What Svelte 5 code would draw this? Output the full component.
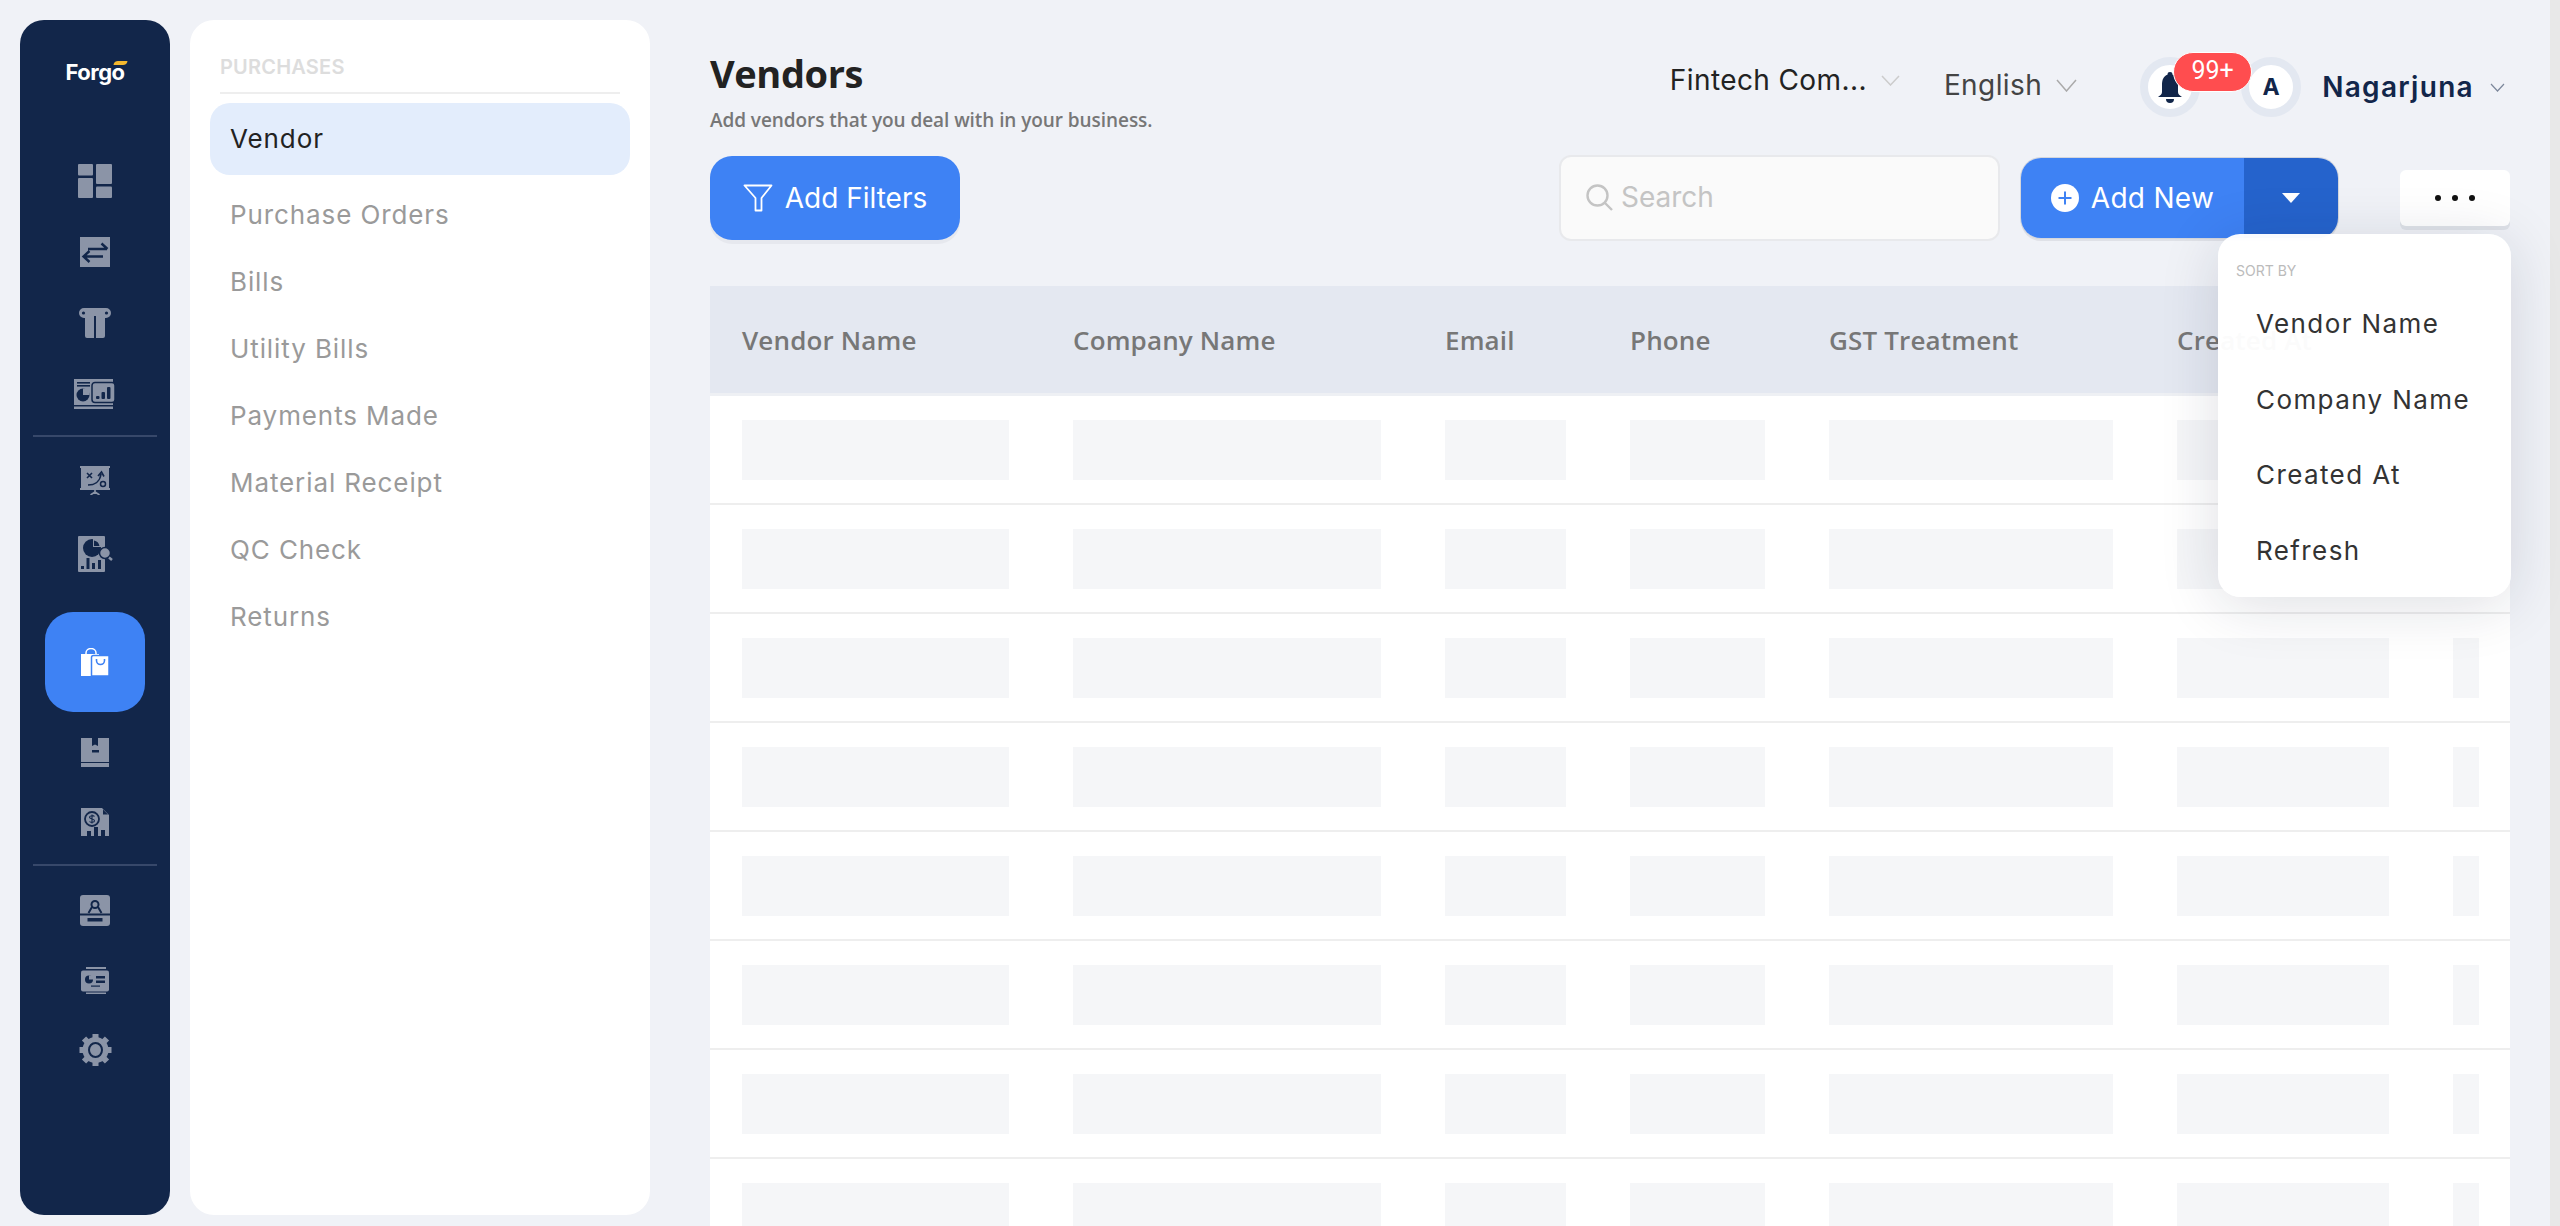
<script>
  const links = ["Purchase Orders", "Bills", "Utility Bills", "Payments Made", "Material Receipt", "QC Check", "Returns"];
  const columns = [
    { label: "Vendor Name", width: 331, bar: 267 },
    { label: "Company Name", width: 372, bar: 308 },
    { label: "Email", width: 185, bar: 121 },
    { label: "Phone", width: 199, bar: 135 },
    { label: "GST Treatment", width: 348, bar: 284 },
    { label: "Created At", width: 276, bar: 212 },
    { label: "", width: 89, bar: 26 }
  ];
  const rows = [0, 1, 2, 3, 4, 5, 6, 7];
  const sortOptions = ["Vendor Name", "Company Name", "Created At", "Refresh"];
</script>

<div class="app">
  <div class="side">
    <nav class="rail">
      <div class="logo">
        <span class="logo-text">Forgo</span>
        <i class="swoosh"></i>
      </div>

      <div class="group">
        <div class="item">
          <svg width="34" height="34" viewBox="0 0 34 34" fill="#8b94a7">
            <rect width="15" height="11.500" rx="1" />
            <rect y="14" width="15" height="20" rx="1" />
            <rect x="18" width="16" height="20" rx="1" />
            <rect x="18" y="22.500" width="16" height="11.500" rx="1" />
          </svg>
        </div>
        <div class="item">
          <svg width="30" height="30" viewBox="0 0 30 30">
            <rect width="30" height="30" fill="#8b94a7" />
            <path d="M8 12h19M21.500 6.500 27.500 12M4 19.500h19M9.500 14 3.500 19.500 9.500 25" fill="none" stroke="#12264a" stroke-width="2.400" />
          </svg>
        </div>
        <div class="item">
          <svg width="32" height="30" viewBox="0 0 32 30" fill="#8b94a7">
            <path d="M5 0h22a5 5 0 0 1 0 10h-1v18a2 2 0 0 1-2 2h-7V8h-2v22H8a2 2 0 0 1-2-2V10H5A5 5 0 0 1 5 0z" />
            <circle cx="4.500" cy="5" r="1.600" fill="#12264a" />
            <circle cx="27.500" cy="5" r="1.600" fill="#12264a" />
          </svg>
        </div>
        <div class="item">
          <svg width="42" height="30" viewBox="0 0 42 30">
            <rect width="39" height="26" fill="#8b94a7" />
            <rect y="27.500" width="39" height="2.500" fill="#8b94a7" />
            <rect x="3" y="3" width="13" height="1.600" fill="#12264a" />
            <rect x="3" y="6" width="13" height="1.600" fill="#12264a" />
            <circle cx="9" cy="16" r="6.500" fill="#12264a" />
            <path d="M9 16V9.500h6.500V16z" fill="#8b94a7" />
            <rect x="18" y="3.500" width="23" height="20" rx="3" fill="#8b94a7" stroke="#12264a" stroke-width="1.500" />
            <rect x="22" y="17" width="3.500" height="3" rx="1" fill="#12264a" />
            <rect x="27.500" y="13" width="3.500" height="7" rx="1" fill="#12264a" />
            <rect x="33" y="8" width="3.500" height="12" rx="1" fill="#12264a" />
          </svg>
        </div>
      </div>

      <hr class="rule first" />

      <div class="group tall">
        <div class="item">
          <svg width="30" height="29" viewBox="0 0 30 29">
            <path d="M0 0h30v2h-1v20h1v2H0v-2h1V2H0z" fill="#8b94a7" />
            <path d="M15 24v2l-4.500 3M15 26l4.500 3" fill="none" stroke="#8b94a7" stroke-width="1.600" />
            <path d="M7 7l5 5M12 7l-5 5M8 19c6 0 12-3 13-11M18 10l3.500-4 2.500 4.500" fill="none" stroke="#12264a" stroke-width="1.600" />
            <circle cx="23" cy="18" r="2.500" fill="none" stroke="#12264a" stroke-width="1.500" />
          </svg>
        </div>
        <div class="item">
          <svg width="35" height="36" viewBox="0 0 35 36">
            <rect width="27" height="36" rx="1" fill="#8b94a7" />
            <circle cx="14" cy="12" r="9" fill="#12264a" />
            <path d="M15 3h8v8h-8z" fill="#8b94a7" />
            <path d="M16 4.500a7 7 0 0 1 5.500 5.500H16z" fill="#12264a" />
            <rect x="3" y="30" width="3" height="3" fill="#12264a" />
            <rect x="8.500" y="22" width="3" height="11" fill="#12264a" />
            <rect x="14" y="27" width="3" height="6" fill="#12264a" />
            <rect x="20" y="24" width="3" height="9" fill="#12264a" />
            <circle cx="27" cy="17" r="5.500" fill="#8b94a7" stroke="#12264a" stroke-width="1.500" />
            <path d="M31 21.500l3 2.500" stroke="#8b94a7" stroke-width="2.500" />
          </svg>
        </div>
      </div>

      <div class="item active">
        <svg width="28" height="28" viewBox="0 0 28 28">
          <path d="M5 6V5a5 4.500 0 0 1 10 0v1" fill="none" stroke="#fff" stroke-width="1.500" />
          <rect y="6" width="18" height="22" fill="#fff" />
          <path d="M10.500 9.500 a2 2 0 0 1 2-2H28v20.500H10.500z" fill="#fff" stroke="#3e82f4" stroke-width="1.500" />
          <path d="M15.500 11v1.500a4 4 0 0 0 8 0V11" fill="none" stroke="#3e82f4" stroke-width="1.600" />
        </svg>
      </div>

      <div class="group third">
        <div class="item">
          <svg width="28" height="29" viewBox="0 0 28 29" fill="#8b94a7">
            <path d="M0 0h11v8l3-1.500L17 8V0h11v24H0z" />
            <rect x="11" y="12" width="7" height="2.500" fill="#12264a" />
            <rect y="25" width="28" height="4" />
          </svg>
        </div>
        <div class="item">
          <svg width="28" height="28" viewBox="0 0 28 28">
            <path d="M0 0h21l7 7v21h-4v-6h-4v6h-3v-9h-4v9h-3v-5H6v5H0z" fill="#8b94a7" />
            <path d="M22 1.500v5h5z" fill="#12264a" />
            <circle cx="11" cy="11" r="7" fill="none" stroke="#12264a" stroke-width="1.800" />
            <path d="M13.500 8.500c-1-1.200-5-1.200-5 .8s5 1.400 5 3.400-4 2-5 .8M11 6.500v9" fill="none" stroke="#12264a" stroke-width="1.100" />
          </svg>
        </div>
      </div>

      <hr class="rule second" />

      <div class="group fourth">
        <div class="item">
          <svg width="30" height="31" viewBox="0 0 30 31">
            <rect width="30" height="31" rx="3" fill="#8b94a7" />
            <rect y="18.500" width="30" height="2" fill="#12264a" />
            <rect x="7.500" y="23" width="15" height="3.500" fill="#12264a" />
            <circle cx="15" cy="9.500" r="3.500" fill="none" stroke="#12264a" stroke-width="2" />
            <path d="M8.500 18 12 12M21.500 18 18 12" fill="none" stroke="#12264a" stroke-width="2" />
          </svg>
        </div>
        <div class="item">
          <svg width="28" height="27" viewBox="0 0 28 27" fill="#8b94a7">
            <rect x="5" width="20" height="2" />
            <rect y="3.500" width="28" height="21" rx="2" />
            <rect x="5" y="25.500" width="20" height="1.500" />
            <circle cx="8" cy="12.500" r="4" fill="#12264a" />
            <path d="M8 8.500h4v4H8z" />
            <rect x="15" y="9" width="9" height="2.500" fill="#12264a" />
            <rect x="15" y="13.500" width="9" height="2.500" fill="#12264a" />
            <rect x="10" y="18.500" width="9" height="1.200" fill="#12264a" />
          </svg>
        </div>
        <div class="item">
          <svg width="33" height="32" viewBox="0 0 33 32" fill="#8b94a7">
            <circle cx="16.500" cy="16" r="13" />
            <g stroke="#8b94a7" stroke-width="6">
              <path d="M16.500 0v32M0.500 16h32M5 4.500l23 23M28 4.500l-23 23" />
            </g>
            <circle cx="16.500" cy="16" r="12" />
            <ellipse cx="16.500" cy="16" rx="6.500" ry="7" fill="none" stroke="#12264a" stroke-width="2" />
          </svg>
        </div>
      </div>
    </nav>

    <aside class="panel">
      <div class="panel-title">PURCHASES</div>
      <ul class="links">
        <li class="current">Vendor</li>
        {#each links as link}
          <li>{link}</li>
        {/each}
      </ul>
    </aside>
  </div>

  <main class="main">
    <header class="top">
      <div class="title">
        <h1>Vendors</h1>
        <p>Add vendors that you deal with in your business.</p>
      </div>
      <div class="controls">
        <div class="select company">
          <span>Fintech Com...</span>
          <svg class="chev" width="19" height="11" viewBox="0 0 19 11"><path d="M1 1l8.500 9L18 1" fill="none" stroke="#ccc" stroke-width="1.500" /></svg>
        </div>
        <div class="select lang">
          <span>English</span>
          <svg class="chev" width="21" height="13" viewBox="0 0 21 13"><path d="M1 1l9.500 11L20 1" fill="none" stroke="#aaa" stroke-width="1.500" /></svg>
        </div>
        <div class="bell ring">
          <svg width="24" height="31" viewBox="0 0 24 31" fill="#12264a">
            <path d="M12 0a2.500 2.500 0 0 1 2.500 2.800C18.500 4 20 8 20 13v7c0 2 1.500 3.500 4 5H0c2.500-1.500 4-3 4-5v-7C4 8 5.500 4 9.500 2.800A2.500 2.500 0 0 1 12 0z" />
            <path d="M8 27h8a4 4 0 0 1-8 0z" />
          </svg>
          <span class="badge">99+</span>
        </div>
        <div class="avatar ring">A</div>
        <div class="select user">
          <span>Nagarjuna</span>
          <svg class="chev" width="15" height="9" viewBox="0 0 15 9"><path d="M1 1l6.500 7L14 1" fill="none" stroke="#7c879b" stroke-width="1.200" /></svg>
        </div>
      </div>
    </header>

    <div class="toolbar">
      <button class="filters">
        <svg width="30" height="28" viewBox="0 0 30 28"><path d="M1.500 1.500h27L18.500 14v12.500h-6V14z" fill="none" stroke="#fff" stroke-width="1.800" stroke-linejoin="round" /></svg>
        Add Filters
      </button>
      <div class="search">
        <svg width="29" height="29" viewBox="0 0 29 29"><circle cx="12.500" cy="12.500" r="10" fill="none" stroke="#c4c4c4" stroke-width="2.400" /><path d="M20 20l7 7" stroke="#c4c4c4" stroke-width="2.400" /></svg>
        <span>Search</span>
      </div>
      <div class="split">
        <button class="add">
          <svg width="28" height="28" viewBox="0 0 28 28"><circle cx="14" cy="14" r="14" fill="#fff" /><path d="M14 7.500v13M7.500 14h13" stroke="#3e82f4" stroke-width="2" /></svg>
          Add New
        </button>
        <button class="caret" aria-label="More add options"><i></i></button>
      </div>
      <button class="more" aria-label="More"><i></i><i></i><i></i></button>
    </div>

    <table class="grid">
      <colgroup>
        {#each columns as col}
          <col style="width: {col.width}px" />
        {/each}
      </colgroup>
      <thead>
        <tr>
          {#each columns as col}
            <th>{col.label}</th>
          {/each}
        </tr>
      </thead>
      <tbody>
        {#each rows as row (row)}
          <tr>
            {#each columns as col}
              <td><div class="bar" style="width: {col.bar}px"></div></td>
            {/each}
          </tr>
        {/each}
      </tbody>
    </table>

    <div class="menu">
      <div class="menu-title">SORT BY</div>
      {#each sortOptions as opt}
        <div class="menu-item">{opt}</div>
      {/each}
    </div>
  </main>

  <div class="scrollbar"></div>
</div>

<style>
  :global(body) {
    margin: 0;
    background: #f0f2f7;
  }

  .app {
    display: flex;
    height: 1226px;
    overflow: hidden;
    font-family: Inter, "Noto Sans", sans-serif;
    background: #f0f2f7;
  }

  .side {
    display: flex;
    gap: 20px;
    padding: 20px 0 11px 20px;
    flex: none;
  }

  .rail {
    width: 150px;
    background: #12264a;
    border-radius: 24px;
    display: flex;
    flex-direction: column;
    align-items: center;
  }

  .logo {
    position: relative;
    height: 125px;
    padding-top: 38px;
    box-sizing: border-box;
  }

  .logo-text {
    color: #fff;
    font-size: 22px;
    font-weight: 700;
    letter-spacing: -0.5px;
    line-height: 28px;
    display: block;
  }

  .swoosh {
    position: absolute;
    top: 41px;
    right: -2px;
    width: 13px;
    height: 4px;
    background: #f5b82e;
    border-radius: 4px 1px 4px 1px;
    transform: skewX(-20deg);
  }

  .group {
    display: flex;
    flex-direction: column;
    width: 100%;
  }

  .item {
    height: 71px;
    display: flex;
    align-items: center;
    justify-content: center;
    flex: none;
  }

  .group.tall {
    margin-top: 7px;
  }

  .group.tall .item {
    height: 73px;
  }

  .group.third,
  .group.fourth {
    margin-top: 5px;
  }

  .group.third .item,
  .group.fourth .item {
    height: 70px;
  }

  .group.fourth {
    margin-top: 9px;
  }

  .item.active {
    width: 100px;
    height: 100px;
    margin-top: 22px;
    background: #3e82f4;
    border-radius: 28px;
  }

  .rule {
    width: 124px;
    height: 2px;
    margin: 6px 0 0;
    border: 0;
    background: #37486a;
    flex: none;
  }

  .rule.second {
    margin-top: 7px;
  }

  .panel {
    width: 460px;
    background: #fff;
    border-radius: 24px;
    padding: 0 20px;
    box-sizing: border-box;
  }

  .panel-title {
    margin: 34px 10px 0;
    padding-bottom: 12px;
    height: 26px;
    line-height: 26px;
    border-bottom: 2px solid #eee;
    color: #ddd;
    font-size: 20px;
    font-weight: 600;
    letter-spacing: 0.2px;
  }

  .links {
    list-style: none;
    margin: 9px 0 0;
    padding: 0;
  }

  .links li {
    height: 67px;
    line-height: 66px;
    padding-left: 20px;
    font-size: 26px;
    letter-spacing: 0.9px;
    color: #9a9a9a;
  }

  .links li.current {
    height: 72px;
    line-height: 72px;
    margin-bottom: 7px;
    background: #e3edfc;
    border-radius: 20px;
    color: #222;
  }

  .main {
    position: relative;
    width: 1800px;
    margin-left: 60px;
    flex: none;
    padding-top: 50px;
  }

  .top {
    display: flex;
    justify-content: space-between;
    height: 105px;
  }

  h1 {
    margin: 0;
    font-family: "Open Sans", sans-serif;
    font-size: 38px;
    font-weight: 700;
    letter-spacing: -0.4px;
    line-height: 46px;
    color: #222;
  }

  .title p {
    margin: 12px 0 0;
    font-family: "Open Sans", sans-serif;
    font-size: 19px;
    font-weight: 600;
    letter-spacing: -0.07px;
    line-height: 24px;
    color: #777;
  }

  .controls {
    display: flex;
    align-items: flex-start;
    padding-right: 5px;
  }

  .select {
    display: flex;
    align-items: center;
    font-size: 28px;
    line-height: 40px;
  }

  .company {
    margin-top: 10px;
    color: #222;
    letter-spacing: 0.4px;
    gap: 14px;
  }

  .lang {
    margin: 15px 0 0 44px;
    color: #444;
    letter-spacing: 0.4px;
    gap: 14px;
  }

  .ring {
    position: relative;
    box-sizing: border-box;
    width: 60px;
    height: 60px;
    margin-top: 7px;
    border: 8px solid #e3e8f1;
    border-radius: 50%;
    background: #fff;
    display: flex;
    align-items: center;
    justify-content: center;
  }

  .bell {
    margin-left: 63px;
  }

  .badge {
    position: absolute;
    top: -13px;
    left: 25px;
    width: 79px;
    height: 40px;
    box-sizing: border-box;
    border: 1px solid #fff;
    border-radius: 20px;
    background: #ff4d4f;
    color: #fff;
    font-family: Roboto, sans-serif;
    font-size: 25px;
    line-height: 36px;
    text-align: center;
    z-index: 2;
  }

  .avatar {
    margin-left: 41px;
    color: #12264a;
    font-size: 23px;
    font-weight: 700;
  }

  .user {
    margin: 17px 0 0 21px;
    color: #12264a;
    font-weight: 600;
    letter-spacing: 1.3px;
    gap: 16px;
  }

  .toolbar {
    display: flex;
    align-items: center;
    height: 86px;
  }

  button {
    border: 0;
    padding: 0;
    font: inherit;
    cursor: pointer;
  }

  .filters {
    width: 250px;
    height: 84px;
    display: flex;
    align-items: center;
    justify-content: center;
    gap: 12px;
    border-radius: 22px;
    background: #3e82f4;
    color: #fff;
    font-size: 28px;
    box-shadow: 0 4px 0 #e6e8ee;
  }

  .search {
    margin-left: auto;
    width: 441px;
    height: 86px;
    box-sizing: border-box;
    display: flex;
    align-items: center;
    gap: 7px;
    padding: 0 0 2px 24px;
    background: #fafafa;
    border: 2px solid #e8e9ec;
    border-radius: 12px;
    color: #c4c4c4;
    font-size: 28px;
  }

  .split {
    margin-left: 21px;
    width: 317px;
    height: 80px;
    display: flex;
    border-radius: 20px;
    overflow: hidden;
    box-shadow: 0 0 0 1px #d4d6dc, 0 3px 0 #dfe1e7;
  }

  .add {
    width: 223px;
    display: flex;
    align-items: center;
    justify-content: center;
    gap: 12px;
    background: #3e82f4;
    color: #fff;
    font-size: 28px;
    letter-spacing: 0.3px;
  }

  .caret {
    flex: 1;
    display: flex;
    align-items: center;
    justify-content: center;
    background: #2563cc;
  }

  .caret i {
    border-left: 9px solid transparent;
    border-right: 9px solid transparent;
    border-top: 10px solid #fff;
  }

  .more {
    margin-left: 62px;
    width: 110px;
    height: 56px;
    display: flex;
    align-items: center;
    justify-content: center;
    gap: 11px;
    background: #fff;
    border-radius: 6px;
    box-shadow: 0 4px 0 #dfe2e8;
  }

  .more i {
    width: 6px;
    height: 6px;
    border-radius: 50%;
    background: #111;
  }

  .grid {
    margin-top: 45px;
    width: 1800px;
    table-layout: fixed;
    border-collapse: collapse;
    background: #fff;
  }

  th {
    height: 107px;
    padding: 0 0 0 32px;
    background: #e4e8f1;
    border-bottom: 3px solid #eef0f4;
    text-align: left;
    font-family: "Open Sans", sans-serif;
    font-size: 26px;
    font-weight: 600;
    letter-spacing: 0.15px;
    color: #777;
    white-space: nowrap;
  }

  td {
    height: 107px;
    padding: 0 0 0 32px;
    border-bottom: 2px solid #eee;
  }

  .bar {
    height: 60px;
    background: #f5f6f8;
  }

  .menu {
    position: absolute;
    top: 234px;
    right: -1px;
    width: 293px;
    height: 363px;
    box-sizing: border-box;
    padding: 28px 18px 0 38px;
    background: rgba(255, 255, 255, 0.97);
    border-radius: 22px;
    box-shadow: 0 8px 60px rgba(20, 30, 60, 0.14);
  }

  .menu-title {
    margin-left: -20px;
    font-size: 14px;
    line-height: 18px;
    color: #bbb;
  }

  .menu-item {
    height: 75.500px;
    line-height: 75.500px;
    font-size: 26px;
    letter-spacing: 1.4px;
    color: #333;
    white-space: nowrap;
  }

  .menu-title + .menu-item {
    margin-top: 6px;
  }

  .scrollbar {
    margin-left: 40px;
    width: 10px;
    background: #e8e8e8;
    flex: none;
  }
</style>
